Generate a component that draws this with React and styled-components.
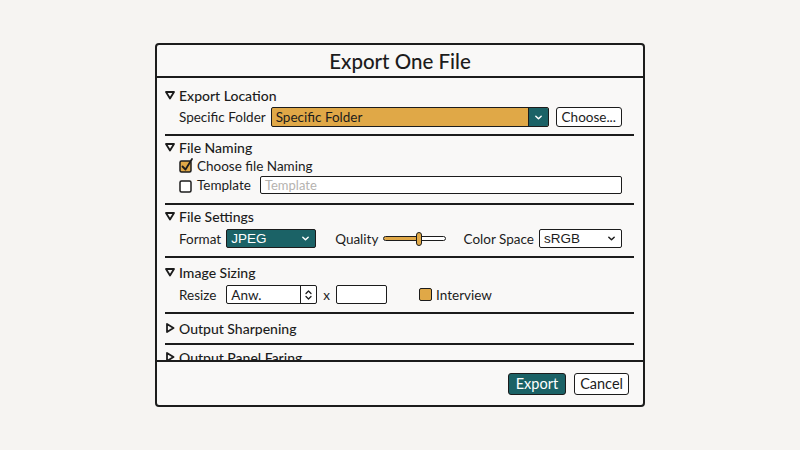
import React from 'react';
import styled, { createGlobalStyle } from 'styled-components';

const TEAL = '#1b6266';
const ORANGE = '#e0a847';
const INK = '#1c1c1c';

const GlobalStyle = createGlobalStyle`
  html, body {
    margin: 0;
    padding: 0;
    background: #f6f4f2;
  }
  body {
    font-family: Lato, "Open Sans", sans-serif;
    color: ${INK};
  }
`;

const Page = styled.div`
  width: 800px;
  height: 450px;
  display: flex;
  align-items: center;
  justify-content: center;
`;

const Dialog = styled.div`
  width: 490px;
  height: 364px;
  box-sizing: border-box;
  border: 2px solid ${INK};
  border-radius: 4px;
  background: #f9f8f7;
  display: flex;
  flex-direction: column;
  overflow: hidden;
`;

const TitleBar = styled.div`
  height: 31px;
  border-bottom: 2px solid ${INK};
  display: flex;
  align-items: center;
  justify-content: center;
  font-size: 20.5px;
  font-weight: 500;
`;

const Body = styled.div`
  flex: 1;
  overflow: hidden;
  padding: 0 9px 0 8px;
`;

const Section = styled.div`
  padding: ${(p) => p.$top || 3}px 0 ${(p) => p.$bottom || 7}px;
  border-bottom: ${(p) => (p.$last ? 'none' : `2px solid ${INK}`)};
  display: flex;
  flex-direction: column;
  gap: ${(p) => p.$gap || 2}px;
`;

const Header = styled.div`
  height: 18px;
  display: flex;
  align-items: center;
  gap: 4px;
  font-size: 14px;
  font-weight: 500;
`;

const Row = styled.div`
  height: ${(p) => p.$h || 20}px;
  display: flex;
  align-items: center;
  padding: 0 12px 0 14px;
  font-size: 13.5px;
  gap: ${(p) => p.$gap || 6}px;
`;

const Label = styled.span`
  margin-right: ${(p) => p.$mr || 0}px;
  margin-left: ${(p) => p.$ml || 0}px;
  white-space: nowrap;
`;

const FolderSelect = styled.div`
  flex: 1;
  height: 20px;
  box-sizing: border-box;
  border: 1.5px solid ${INK};
  border-radius: 2px;
  background: ${ORANGE};
  display: flex;
  align-items: center;
  overflow: hidden;
  span {
    flex: 1;
    padding-left: 4px;
    font-size: 13.5px;
  }
`;

const ArrowBox = styled.div`
  width: 19px;
  height: 100%;
  background: ${TEAL};
  border-left: 1.5px solid ${INK};
  display: flex;
  align-items: center;
  justify-content: center;
`;

const Button = styled.div`
  height: ${(p) => p.$h || 20}px;
  box-sizing: border-box;
  padding: 0 ${(p) => p.$px || 7}px;
  border: 1.5px solid ${INK};
  border-radius: 3px;
  background: ${(p) => (p.$primary ? TEAL : '#fff')};
  color: ${(p) => (p.$primary ? '#fff' : INK)};
  display: flex;
  align-items: center;
  font-size: ${(p) => p.$fs || 13.5}px;
`;

const TextInput = styled.div`
  height: ${(p) => p.$h || 18}px;
  width: ${(p) => p.$w}px;
  flex: ${(p) => (p.$w ? 'none' : 1)};
  box-sizing: border-box;
  border: 1.5px solid ${INK};
  border-radius: 2px;
  background: #fff;
  display: flex;
  align-items: center;
  padding-left: 4px;
  font-size: 13px;
  color: ${(p) => (p.$placeholder ? '#b5b3b0' : INK)};
`;

const Select = styled.div`
  width: ${(p) => p.$w}px;
  height: 19px;
  box-sizing: border-box;
  border: 1.5px solid ${INK};
  border-radius: 2px;
  background: ${(p) => (p.$teal ? TEAL : '#fff')};
  color: ${(p) => (p.$teal ? '#fff' : INK)};
  display: flex;
  align-items: center;
  justify-content: space-between;
  padding: 0 5px 0 4px;
  font-size: 13.5px;
  font-family: "Liberation Sans", Arial, sans-serif;
`;

const Spinner = styled.div`
  width: 91px;
  height: 19px;
  box-sizing: border-box;
  border: 1.5px solid ${INK};
  border-radius: 2px;
  background: #fff;
  display: flex;
  align-items: center;
  span {
    flex: 1;
    padding-left: 4px;
    font-size: 13.5px;
  }
`;

const SpinBox = styled.div`
  width: 15px;
  height: 100%;
  border-left: 1.5px solid ${INK};
  display: flex;
  align-items: center;
  justify-content: center;
`;

const Slider = styled.div`
  position: relative;
  width: 63px;
  height: 14px;
  display: flex;
  align-items: center;
`;

const Track = styled.div`
  width: 100%;
  height: 5px;
  box-sizing: border-box;
  border: 1.2px solid ${INK};
  border-radius: 3px;
  background: linear-gradient(to right, ${ORANGE} 55%, #fff 55%);
`;

const Thumb = styled.div`
  position: absolute;
  left: 33px;
  top: 0;
  width: 6px;
  height: 14px;
  box-sizing: border-box;
  border: 1.3px solid ${INK};
  border-radius: 3px;
  background: ${ORANGE};
`;

const OrangeBox = styled.div`
  width: 11px;
  height: 11px;
  margin-left: ${(p) => p.$ml || 0}px;
  border: 1.5px solid ${INK};
  border-radius: 2px;
  background: ${ORANGE};
`;

const Footer = styled.div`
  height: 43px;
  border-top: 2px solid ${INK};
  display: flex;
  align-items: center;
  justify-content: flex-end;
  gap: 8px;
  padding-right: 14px;
`;

const Tri = ({ open }) => (
  <svg width="10" height="10" viewBox="0 0 10 10">
    {open ? (
      <path d="M1 2 L9 2 L5 8.5 Z" fill="none" stroke={INK} strokeWidth="1.8" strokeLinejoin="round" />
    ) : (
      <path d="M2 1 L8.5 5 L2 9 Z" fill="none" stroke={INK} strokeWidth="1.8" strokeLinejoin="round" />
    )}
  </svg>
);

const Chevron = ({ color = INK, size = 9 }) => (
  <svg width={size} height={size} viewBox="0 0 10 10">
    <path d="M2 3.5 L5 6.5 L8 3.5" fill="none" stroke={color} strokeWidth="1.6" strokeLinecap="round" strokeLinejoin="round" />
  </svg>
);

const Check = ({ checked }) => (
  <svg width="15" height="15" viewBox="0 0 15 15" style={{ overflow: 'visible' }}>
    <rect x="1" y="3" width="11" height="11" rx="1.5" fill={checked ? ORANGE : '#fff'} stroke={INK} strokeWidth="1.5" />
    {checked && (
      <path d="M3.5 8.5 L6.5 11.5 L13 1" fill="none" stroke={INK} strokeWidth="1.8" strokeLinecap="round" strokeLinejoin="round" />
    )}
  </svg>
);

const UpDown = () => (
  <svg width="9" height="12" viewBox="0 0 9 12">
    <path d="M2 4.5 L4.5 2 L7 4.5 M2 7.5 L4.5 10 L7 7.5" fill="none" stroke={INK} strokeWidth="1.3" strokeLinecap="round" strokeLinejoin="round" />
  </svg>
);

const App = () => {
  return (
    <>
      <GlobalStyle />
      <Page>
        <Dialog>
          <TitleBar>Export One File</TitleBar>
          <Body>
            {/* export location */}
            <Section $top={8} $gap={3}>
              <Header><Tri open />Export Location</Header>
              <Row $gap={5}>
                <Label>Specific Folder</Label>
                <FolderSelect>
                  <span>Specific Folder</span>
                  <ArrowBox><Chevron color="#fff" /></ArrowBox>
                </FolderSelect>
                <Button $h={20} $px={5} style={{ marginLeft: 2 }}>Choose...</Button>
              </Row>
            </Section>
            {/* file naming */}
            <Section $top={2} $bottom={8} $gap={1}>
              <Header><Tri open />File Naming</Header>
              <Row $h={17} $gap={3}>
                <Check checked />
                <Label>Choose file Naming</Label>
              </Row>
              <Row $h={20} $gap={3}>
                <Check />
                <Label $mr={6}>Template</Label>
                <TextInput $placeholder>Template</TextInput>
              </Row>
            </Section>
            {/* file settings */}
            <Section $top={2} $bottom={8} $gap={4}>
              <Header><Tri open />File Settings</Header>
              <Row $h={19} $gap={5}>
                <Label>Format</Label>
                <Select $w={91} $teal>
                  <span>JPEG</span>
                  <Chevron color="#fff" />
                </Select>
                <Label $ml={14}>Quality</Label>
                <Slider>
                  <Track />
                  <Thumb />
                </Slider>
                <Label $ml={13}>Color Space</Label>
                <Select $w={84}>
                  <span>sRGB</span>
                  <Chevron />
                </Select>
              </Row>
            </Section>
            {/* image sizing */}
            <Section $top={5} $bottom={8} $gap={4}>
              <Header><Tri open />Image Sizing</Header>
              <Row $h={19} $gap={6}>
                <Label $mr={4}>Resize</Label>
                <Spinner>
                  <span>Anw.</span>
                  <SpinBox><UpDown /></SpinBox>
                </Spinner>
                <Label>x</Label>
                <TextInput $w={51} $h={19}></TextInput>
                <OrangeBox $ml={26} />
                <Label $ml={-2}>Interview</Label>
              </Row>
            </Section>
            <Section $top={5} $bottom={6}>
              <Header><Tri />Output Sharpening</Header>
            </Section>
            <Section $top={3} $last>
              <Header><Tri />Output Panel Faring</Header>
            </Section>
          </Body>
          <Footer>
            <Button $primary $h={22} $px={7} $fs={14.5}>Export</Button>
            <Button $h={22} $px={5} $fs={14.5}>Cancel</Button>
          </Footer>
        </Dialog>
      </Page>
    </>
  );
};

export default App;
